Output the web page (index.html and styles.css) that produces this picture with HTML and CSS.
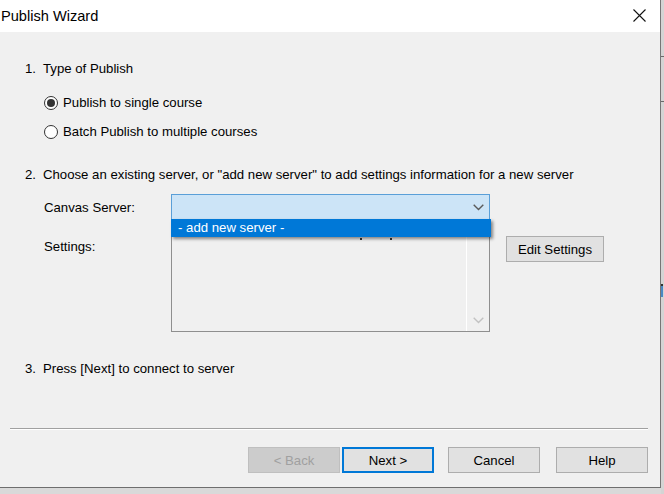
FILE: index.html
```html
<!DOCTYPE html>
<html>
<head>
<meta charset="utf-8">
<title>Publish Wizard</title>
<link rel="stylesheet" href="styles.css">
</head>
<body>
<div class="screen">
  <div class="window">
    <div class="titlebar">
      <span class="title">Publish Wizard</span>
      <svg class="close" width="13" height="13" viewBox="0 0 13 13"><path d="M0.5 0.5L12.5 12.5M12.5 0.5L0.5 12.5" stroke="#111" stroke-width="1.1" fill="none"/></svg>
    </div>
    <div class="content">
      <div class="step"><span class="num">1.</span>Type of Publish</div>
      <div class="radios">
        <div class="radio"><span class="radio-circle checked"></span>Publish to single course</div>
        <div class="radio"><span class="radio-circle"></span>Batch Publish to multiple courses</div>
      </div>
      <div class="step step2"><span class="num">2.</span>Choose an existing server, or "add new server" to add settings information for a new server</div>
      <div class="server-grid">
        <div class="field-label">Canvas Server:</div>
        <div class="combo-wrap">
          <div class="combo">
            <svg class="chev" width="11" height="7" viewBox="0 0 11 7"><path d="M0.7 0.8L5.5 5.6L10.3 0.8" stroke="#5a5a5a" stroke-width="1.4" fill="none"/></svg>
          </div>
          <div class="popup">- add new server -</div>
        </div>
        <div class="spacer"></div>
        <div class="field-label settings-label">Settings:</div>
        <div class="textbox">
          <div class="textbox-area">
            <span class="speck speck-a"></span>
            <span class="speck speck-b"></span>
          </div>
          <div class="scrollbar">
            <svg class="chev-dis" width="11" height="7" viewBox="0 0 11 7"><path d="M0.7 0.8L5.5 5.6L10.3 0.8" stroke="#c2c2c2" stroke-width="1.4" fill="none"/></svg>
          </div>
        </div>
        <button class="btn edit">Edit Settings</button>
      </div>
      <div class="step step3"><span class="num">3.</span>Press [Next] to connect to server</div>
    </div>
    <div class="footer">
      <div class="separator"></div>
      <div class="buttons">
        <button class="btn nav disabled">&lt; Back</button>
        <button class="btn nav default">Next &gt;</button>
        <button class="btn nav cancel">Cancel</button>
        <button class="btn nav help">Help</button>
      </div>
    </div>
  </div>
  <div class="behind">
    <span class="mark mark-a"></span>
    <span class="mark mark-b"></span>
    <span class="glyph"></span>
  </div>
</div>
</body>
</html>
```

FILE: styles.css
```css
* { box-sizing: border-box; }

html, body {
  margin: 0;
  padding: 0;
  width: 664px;
  height: 494px;
  overflow: hidden;
  background: #d9d9d9;
  font-family: "Liberation Sans", Arial, sans-serif;
  font-size: 13.2px;
  color: #000;
}

.screen {
  display: flex;
  align-items: flex-start;
}

.window {
  width: 661px;
  height: 488px;
  background: #f0f0f0;
  border-right: 1px solid #767676;
  border-bottom: 1px solid #6e6e6e;
  display: flex;
  flex-direction: column;
}

.titlebar {
  height: 32px;
  background: #fff;
  display: flex;
  align-items: center;
  justify-content: space-between;
  padding: 0 14px 0 1px;
}

.title {
  font-size: 14.6px;
  line-height: 32px;
  color: #000;
  margin-top: -1px;
}

.close { display: block; margin-top: -1px; }

.content {
  padding: 29px 0 0 25px;
}

.step {
  line-height: 16px;
  height: 16px;
  white-space: nowrap;
}

.num {
  display: inline-block;
  width: 18px;
}

.radios {
  margin: 16px 0 0 19px;
  display: flex;
  flex-direction: column;
  gap: 9px;
}

.radio {
  height: 20px;
  display: flex;
  align-items: center;
  gap: 5px;
  line-height: 16px;
}

.radio-circle {
  width: 14px;
  height: 14px;
  border: 1px solid #333;
  border-radius: 50%;
  background: #fff;
  display: flex;
  align-items: center;
  justify-content: center;
  margin-top: -1px;
}

.radio-circle.checked::after {
  content: "";
  width: 8px;
  height: 8px;
  border-radius: 50%;
  background: #333;
}

.step2 { margin-top: 25px; }

.server-grid {
  margin: 11px 0 0 19px;
  display: grid;
  grid-template-columns: 127px 319px auto;
  grid-template-rows: 26px 106px;
  row-gap: 6px;
  align-items: start;
}

.field-label {
  line-height: 16px;
  margin-top: 6px;
}

.settings-label { margin-top: 13px; }

.combo-wrap {
  position: relative;
  height: 26px;
}

.combo {
  height: 26px;
  background: #cce4f7;
  border: 1px solid #5a9fd8;
  display: flex;
  align-items: center;
  justify-content: flex-end;
  padding-right: 5px;
}

.chev { display: block; }

.popup {
  position: absolute;
  top: 25px;
  left: 0;
  width: 320px;
  height: 18px;
  background: #0078d7;
  color: #fff;
  line-height: 18px;
  padding-left: 7px;
  box-shadow: 2px 2px 3px rgba(0, 0, 0, 0.45);
  z-index: 2;
}

.textbox {
  height: 106px;
  border: 1px solid #8f8f8f;
  background: #f0f0f0;
  display: flex;
}

.textbox-area {
  flex: 1;
  position: relative;
  border-right: 1px solid #fff;
}

.speck {
  position: absolute;
  top: 11px;
  width: 2px;
  height: 2px;
  background: #333;
}
.speck-a { left: 188px; }
.speck-b { left: 218px; }

.scrollbar {
  width: 22px;
  display: flex;
  align-items: flex-end;
  justify-content: center;
  padding-bottom: 7px;
}

.btn {
  font-family: "Liberation Sans", Arial, sans-serif;
  font-size: 13.2px;
  color: #000;
  background: #e1e1e1;
  border: 1px solid #adadad;
  height: 26px;
  padding: 0;
  margin: 0;
  text-align: center;
  line-height: 25px;
}

.edit {
  width: 98px;
  margin: 10px 0 0 16px;
}

.step3 { margin-top: 29px; }

.footer {
  margin-top: 51px;
}

.separator {
  margin-left: 10px;
  width: 638px;
  height: 2px;
  border-top: 1px solid #a0a0a0;
  border-bottom: 1px solid #fff;
}

.buttons {
  margin-top: 17px;
  padding-left: 248px;
  display: flex;
}

.nav { width: 92px; }

.disabled {
  background: #cccccc;
  border-color: #bfbfbf;
  color: #a0a0a0;
}

.default {
  margin-left: 2px;
  border: 2px solid #0078d7;
  line-height: 23px;
}

.cancel { margin-left: 14px; }
.help { margin-left: 16px; }

.behind {
  position: relative;
  width: 3px;
  height: 494px;
  background: #d4d4d4;
}

.mark {
  position: absolute;
  left: 0;
  width: 3px;
  height: 1px;
  background: #6a6a6a;
}
.mark-a { top: 56px; }
.mark-b { top: 101px; }

.glyph {
  position: absolute;
  left: 0;
  top: 284px;
  width: 2px;
  height: 13px;
  background: linear-gradient(#333 0 2px, #4a88c4 2px);
}
```
